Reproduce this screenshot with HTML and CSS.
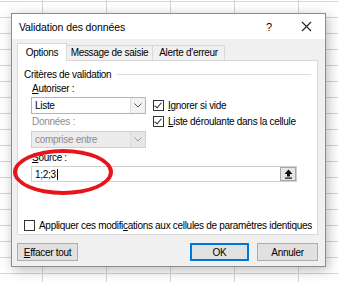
FILE: index.html
```html
<!DOCTYPE html>
<html lang="fr">
<head>
    <meta charset="UTF-8">
    <meta name="viewport" content="width=device-width, initial-scale=1.0">
    <title>Validation des données</title>
    <link rel="stylesheet" href="styles.css">
</head>
<body>
    <div class="dialog">
        <div class="titlebar">
            <span class="title">Validation des données</span>
            <span class="help">?</span>
            <span class="close">
                <svg width="11" height="11" viewBox="0 0 11 11"><path d="M1 1 L10 10 M10 1 L1 10" stroke="#222" stroke-width="1.1" fill="none"/></svg>
            </span>
        </div>

        <div class="body">
            <div class="tabs">
                <div class="tab active">Options</div>
                <div class="tab">Message de saisie</div>
                <div class="tab">Alerte d'erreur</div>
            </div>

            <div class="panel">
                <div class="group-title"><span>Critères de validation</span></div>

                <div class="criteria">
                    <div class="left">
                        <div class="label"><u>A</u>utoriser :</div>
                        <div class="select">
                            <span class="value">Liste</span>
                            <span class="arrow"><svg width="8" height="5" viewBox="0 0 8 5"><path d="M0.5 0.5 L4 4 L7.5 0.5" stroke="#555" fill="none"/></svg></span>
                        </div>
                        <div class="label disabled">Données :</div>
                        <div class="select off">
                            <span class="value">comprise entre</span>
                            <span class="arrow"><svg width="8" height="5" viewBox="0 0 8 5"><path d="M0.5 0.5 L4 4 L7.5 0.5" stroke="#999" fill="none"/></svg></span>
                        </div>
                    </div>
                    <div class="right">
                        <label class="check"><span class="box checked"></span><span><u>I</u>gnorer si vide</span></label>
                        <label class="check"><span class="box checked"></span><span><u>L</u>iste déroulante dans la cellule</span></label>
                    </div>
                </div>

                <div class="label source-label"><u>S</u>ource :</div>
                <div class="source">
                    <span class="value">1;2;3<span class="caret"></span></span>
                    <span class="pick"><svg width="9" height="10" viewBox="0 0 9 10"><path d="M4.5 0.5 L8.5 5 L6 5 L6 7.5 L3 7.5 L3 5 L0.5 5 Z" fill="#111"/><rect x="1" y="8.5" width="7" height="1.2" fill="#111"/></svg></span>
                </div>

                <label class="check apply"><span class="box"></span><span>Appliquer ces modifi<u>c</u>ations aux cellules de paramètres identiques</span></label>

                <div class="ring"></div>
            </div>

            <div class="footer">
                <button class="btn"><u>E</u>ffacer tout</button>
                <span class="spacer"></span>
                <button class="btn default">OK</button>
                <button class="btn">Annuler</button>
            </div>
        </div>
    </div>
</body>
</html>
```

FILE: styles.css
```css
body {
    margin: 0;
    padding: 1px 0 0 0;
    height: 282px;
    box-sizing: border-box;
    overflow: hidden;
    font-family: "Liberation Sans", Arial, sans-serif;
    font-size: 10px;
    letter-spacing: -0.3px;
    color: #000;
    background-color: #fff;
    background-image:
        linear-gradient(to right, #d6d6d6 1px, transparent 1px),
        linear-gradient(to bottom, #d6d6d6 1px, transparent 1px);
    background-size: 64px 100%, 100% 16px;
    background-position: 42px 0, 0 1px;
}
.dialog {
    width: 313px;
    height: 252px;
    margin: 12px 0 0 11px;
    border: 1px solid #8c8c8c;
    background-color: #f0f0f0;
    box-shadow: 2px 3px 12px rgba(0, 0, 0, 0.28);
    display: flex;
    flex-direction: column;
}
.titlebar {
    height: 25px;
    background-color: #fff;
    display: flex;
    align-items: center;
    padding: 0 13px 0 7px;
    font-size: 10.5px;
    letter-spacing: -0.1px;
}
.title {
    flex: 1;
}
.help {
    width: 12px;
    margin-right: 26px;
    text-align: center;
    font-size: 11px;
}
.close {
    display: flex;
}
.body {
    flex: 1;
    padding: 4px 7px 0 5px;
}
.tabs {
    display: flex;
    align-items: flex-end;
    height: 17px;
}
.tab {
    height: 15px;
    line-height: 14px;
    padding: 0;
    text-align: center;
    border: 1px solid #d9d9d9;
    border-bottom: none;
    border-left: none;
    box-sizing: border-box;
    background-color: #f0f0f0;
    white-space: nowrap;
}
.tab.active {
    height: 18px;
    line-height: 17px;
    width: 50px;
    border-left: 1px solid #d9d9d9;
    background-color: #fff;
    margin-bottom: -1px;
    position: relative;
    z-index: 1;
}
.tab:nth-child(2) {
    width: 86px;
}
.tab:nth-child(3) {
    width: 72px;
}
.panel {
    position: relative;
    height: 175px;
    box-sizing: border-box;
    background-color: #fff;
    border: 1px solid #d9d9d9;
    padding: 6px 6px 0 6px;
}
.group-title {
    display: flex;
    align-items: center;
    height: 14px;
}
.group-title::after {
    content: "";
    flex: 1;
    height: 1px;
    margin-left: 6px;
    background-color: #dcdcdc;
}
.criteria {
    display: flex;
    padding-left: 7px;
}
.left {
    width: 115px;
}
.label {
    height: 16px;
    line-height: 16px;
    padding-left: 1px;
}
.label.disabled {
    color: #8d8d8d;
}
.select {
    height: 17px;
    box-sizing: border-box;
    border: 1px solid #b4b4b4;
    display: flex;
    align-items: center;
    background-color: #fff;
}
.select .value {
    flex: 1;
    padding-left: 3px;
}
.select .arrow {
    width: 14px;
    height: 100%;
    border-left: 1px solid #dcdcdc;
    background-color: #f2f2f2;
    display: flex;
    align-items: center;
    justify-content: center;
}
.select.off {
    background-color: #ececec;
    border-color: #d0d0d0;
    color: #8d8d8d;
    margin-top: 1px;
}
.select.off .arrow {
    background-color: #e6e6e6;
}
.right {
    padding: 16px 0 0 7px;
}
.check {
    display: flex;
    align-items: center;
    height: 16px;
    white-space: nowrap;
}
.box {
    width: 9px;
    height: 9px;
    border: 1px solid #333;
    background-color: #fff;
    margin-right: 4px;
    flex: none;
    position: relative;
}
.box.checked::after {
    content: "";
    position: absolute;
    left: 2px;
    top: 0;
    width: 3px;
    height: 6px;
    border: solid #333;
    border-width: 0 1px 1px 0;
    transform: rotate(40deg);
}
.source-label {
    margin: 2px 0 0 7px;
}
.source {
    margin-left: 7px;
    width: 266px;
    height: 16px;
    box-sizing: border-box;
    border: 1px solid #cfcfcf;
    display: flex;
    align-items: center;
}
.source .value {
    flex: 1;
    padding-left: 3px;
    display: flex;
    align-items: center;
}
.caret {
    width: 1px;
    height: 11px;
    background-color: #000;
    margin-left: 1px;
}
.pick {
    width: 16px;
    height: 14px;
    box-sizing: border-box;
    border: 1px solid #a8a8a8;
    background-color: #e6e6e6;
    display: flex;
    align-items: center;
    justify-content: center;
}
.apply {
    margin-top: 35px;
}
.ring {
    position: absolute;
    left: -5px;
    top: 88px;
    width: 92px;
    height: 38px;
    border: 4px solid #e8141c;
    border-radius: 50%;
}
.footer {
    display: flex;
    align-items: center;
    gap: 8px;
    padding-top: 8px;
}
.spacer {
    flex: 1;
}
.btn {
    font-family: inherit;
    font-size: 10px;
    letter-spacing: -0.3px;
    height: 18px;
    padding: 0;
    width: 61px;
    background-color: #e1e1e1;
    border: 1px solid #adadad;
    color: #000;
}
.btn.default {
    width: 59px;
    border: 2px solid #0078d7;
}
```
